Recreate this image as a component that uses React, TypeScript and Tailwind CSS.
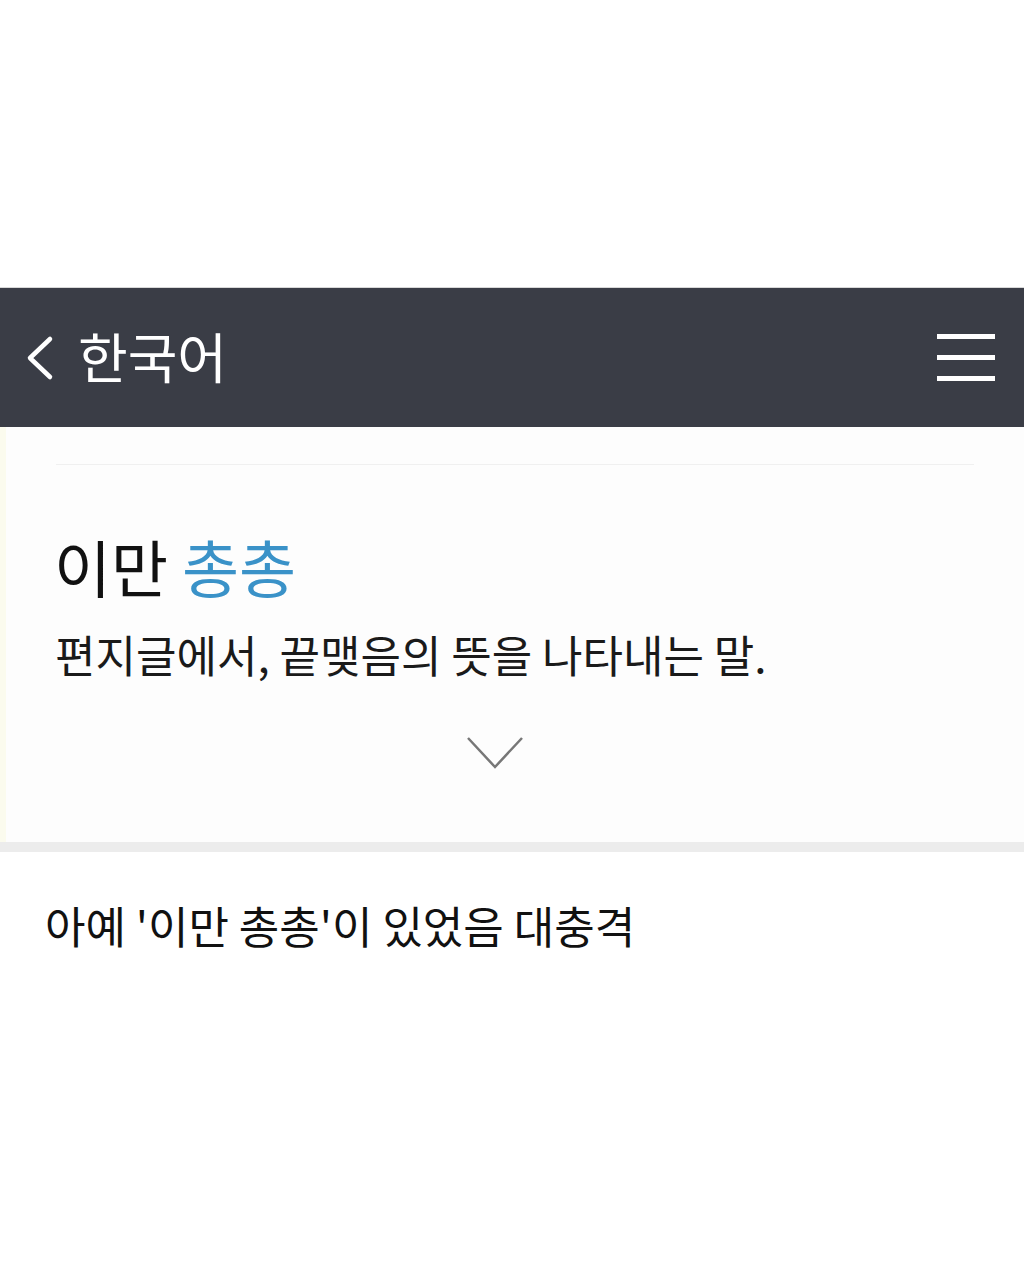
const font = { fontFamily: '"Noto Sans CJK KR", "Noto Sans", sans-serif' };

export default function App() {
  return (
    <div className="w-[1024px] h-[1280px] bg-white flex flex-col" style={font}>
      <div className="h-[288px] border-b border-[#d8d8d8]" />

      {/* header bar */}
      <div className="h-[139px] bg-[#3a3d46] flex items-center justify-between pl-[22px] pr-[29px]">
        <div className="flex items-center gap-[22px]">
          <svg width="34" height="50" viewBox="0 0 34 50" fill="none">
            <path d="M28 6 L8 25 L28 44" stroke="#ffffff" strokeWidth="4.5" strokeLinecap="round" strokeLinejoin="round" />
          </svg>
          <span className="text-white text-[54px] leading-none -mt-[4px]">한국어</span>
        </div>
        <div className="flex flex-col gap-[16px]">
          <div className="w-[58px] h-[5px] bg-white" />
          <div className="w-[58px] h-[5px] bg-white" />
          <div className="w-[58px] h-[5px] bg-white" />
        </div>
      </div>

      {/* entry card */}
      <div className="h-[415px] bg-[#fdfdfd] border-l-[6px] border-[#fbfbee] flex flex-col">
        <div className="mx-[50px] mt-[37px] border-t border-[#f0f0f0]" />
        <div className="pl-[48px] pt-[70px] text-[62px] leading-none text-[#111111]">
          이만 <span className="text-[#3a92c8]">총총</span>
        </div>
        <div className="pl-[49px] pt-[35px] text-[44px] leading-none text-[#1a1a1a]">
          편지글에서, 끝맺음의 뜻을 나타내는 말.
        </div>
        <div className="flex justify-center pt-[59px] pr-[40px]">
          <svg width="60" height="36" viewBox="0 0 60 36" fill="none">
            <path d="M3 3 L30 32 L57 3" stroke="#777777" strokeWidth="2.5" />
          </svg>
        </div>
      </div>
      <div className="h-[10px] bg-[#ececec]" />

      <div className="pl-[45px] pt-[51px] text-[44px] leading-none text-[#111111]">
        아예 '이만 총총'이 있었음 대충격
      </div>
    </div>
  );
}
